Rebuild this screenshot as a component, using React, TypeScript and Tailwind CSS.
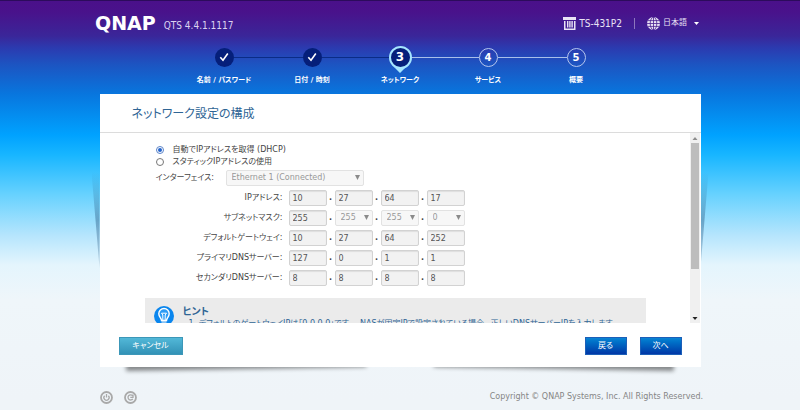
import type { ReactElement, ReactNode } from "react";
import { Fragment, useState } from "react";

const stepLineClass = "h-px flex-1";
const fieldClass = "block h-4 w-full rounded-xs border border-[#d2d2d2] bg-[#f2f2f2] px-[3px] text-[8px] text-[#555]"
  + " shadow-[inset_0_1px_1px_rgba(0,0,0,0.08)] outline-none";
const selectClass = "block h-4 w-full appearance-none rounded-xs border border-[#e2e2e2] bg-[#f7f7f7] pl-[5px] text-[8px]"
  + " text-[#999] opacity-100 outline-none";
const primaryButtonClass = "h-[18px] w-[42px] border border-[#1c5fb8] bg-linear-to-b from-[#0a83d3] to-[#0336a6] text-[8px] leading-none text-white";
const wedgeClass = "absolute top-[78px] h-24 w-2 bg-linear-to-b from-transparent via-[#1d4f7a]/40 to-[#1d4f7a]/20";
const liftClass = "absolute bottom-[7px] h-2 w-2/5 shadow-[0_9px_4px_rgba(0,0,0,0.45)]";

interface Step {
  readonly label: string;
  readonly state: "done" | "active" | "todo";
}

interface AddressRow {
  readonly id: string;
  readonly label: string;
  readonly octets: string[];
  readonly selectFrom?: number;
}

const steps: Step[] = [
  { label: "名前 / パスワード", state: "done" },
  { label: "日付 / 時刻", state: "done" },
  { label: "ネットワーク", state: "active" },
  { label: "サービス", state: "todo" },
  { label: "概要", state: "todo" }
];

const rows: AddressRow[] = [
  { id: "ip", label: "IPアドレス:", octets: ["10", "27", "64", "17"] },
  { id: "mask", label: "サブネットマスク:", octets: ["255", "255", "255", "0"], selectFrom: 1 },
  { id: "gateway", label: "デフォルトゲートウェイ:", octets: ["10", "27", "64", "252"] },
  { id: "dns1", label: "プライマリDNSサーバー:", octets: ["127", "0", "1", "1"] },
  { id: "dns2", label: "セカンダリDNSサーバー:", octets: ["8", "8", "8", "8"] }
];

function NasIcon(): ReactElement {
  return (
    <svg viewBox="0 0 13 13" className="h-[13px] w-[13px]" fill="#e9e3f5" aria-hidden="true">
      <path d="M0 0h13v3H0z" />
      <path d="M1 4h1.5v9H1zM11 4h1.5v9H11zM2 11.5h10V13H2zM4 4h1.4v6.5H4zM6.2 4h1.4v6.5H6.2zM8.4 4h1.4v6.5H8.4z" />
    </svg>
  );
}

function GlobeIcon(): ReactElement {
  return (
    <svg viewBox="0 0 13 13" className="h-[13px] w-[13px]" aria-hidden="true">
      <circle cx="6.5" cy="6.5" r="6.5" fill="#e9e3f5" />
      <g fill="none" stroke="#47208f" strokeWidth="0.8">
        <path d="M6.5 0v13M0 6.5h13M1 3.6h11M1 9.4h11" />
        <ellipse cx="6.5" cy="6.5" rx="3.3" ry="6.3" />
      </g>
    </svg>
  );
}

function BulbIcon(): ReactElement {
  return (
    <svg viewBox="0 0 20 20" className="h-5 w-5 shrink-0" aria-hidden="true">
      <circle cx="10" cy="10" r="10" fill="#0a86ee" />
      <path
        d="M7.5 14.5c0-2.5-2.7-3.6-2.7-6.8a5.2 5.2 0 0 1 10.4 0c0 3.2-2.7 4.3-2.7 6.8z"
        fill="#2b9bf5"
        stroke="#fff"
        strokeWidth="1.4"
      />
      <path d="M8.8 14V9L7.5 7.2h5L11.2 9v5M7.5 16h5M8 17.8h4" fill="none" stroke="#fff" strokeWidth="1" />
    </svg>
  );
}

function StepBadge({ step, index }: { readonly step: Step; readonly index: number }): ReactElement {
  if (step.state === "done") {
    return (
      <span className="grid h-[19px] w-[19px] place-items-center rounded-full bg-[#051f7a]">
        <svg viewBox="0 0 10 10" className="h-[10px] w-[10px]" fill="none" stroke="#fff" strokeWidth="1.6" aria-hidden="true">
          <path d="M1.3 5.2 4 8.2 8.8 1.5" />
        </svg>
      </span>
    );
  }
  if (step.state === "active") {
    return (
      <span className="relative grid h-[23px] w-[23px] place-items-center rounded-full border-2 border-[#a5e6ff] bg-[#051f7a] text-xs font-bold text-white">
        {index + 1}
        <svg viewBox="0 0 12 6" className="absolute top-[19px] h-[6px] w-3" fill="#a5e6ff" aria-hidden="true">
          <path d="M0 0q6 2.5 12 0L6 6z" />
        </svg>
      </span>
    );
  }
  return (
    <span className="grid h-[19px] w-[19px] place-items-center rounded-full border border-[#b5c6ee] text-[10px] font-bold text-white">
      {index + 1}
    </span>
  );
}

function Stepper(): ReactElement {
  return (
    <ol className="mx-auto flex w-full max-w-[440px] pt-2">
      {steps.map((step, i) => (
        <li key={step.label} className="flex flex-1 flex-col items-center" aria-current={step.state === "active" ? "step" : undefined}>
          <div className="flex h-6 w-full items-center">
            <span className={`${stepLineClass} ${i === 0 ? "" : step.state === "todo" ? "bg-[#a9bfea]" : "bg-[#0b2c86]"}`} />
            <StepBadge step={step} index={i} />
            <span className={`${stepLineClass} ${i === steps.length - 1 ? "" : step.state === "done" ? "bg-[#0b2c86]" : "bg-[#a9bfea]"}`} />
          </div>
          <span className="mt-1 text-[7px] leading-[14px] font-bold whitespace-nowrap text-white">{step.label}</span>
        </li>
      ))}
    </ol>
  );
}

function ModeOption({ checked, onSelect, children }: {
  readonly checked: boolean;
  readonly onSelect: () => void;
  readonly children: ReactNode;
}): ReactElement {
  return (
    <label className="flex h-3 items-center gap-[9px]">
      <input
        type="radio"
        name="mode"
        checked={checked}
        onChange={onSelect}
        className={"grid h-2 w-2 appearance-none place-items-center rounded-full border border-[#777] bg-white"
          + " before:h-1 before:w-1 before:rounded-full checked:border-[#5a83c8] checked:before:bg-[#2464cc]"}
      />
      {children}
    </label>
  );
}

function DisabledSelect({ id, value, label }: {
  readonly id?: string;
  readonly value: string;
  readonly label?: string;
}): ReactElement {
  return (
    <span className="relative block w-full">
      <select id={id} className={selectClass} aria-label={label} defaultValue={value} disabled>
        <option>{value}</option>
      </select>
      <svg viewBox="0 0 5 5" className="absolute top-[5px] right-1 h-[5px] w-[5px]" fill="#8a8a8a" aria-hidden="true">
        <path d="M0 0h5L2.5 5z" />
      </svg>
    </span>
  );
}

function AddressFields({ row }: { readonly row: AddressRow }): ReactElement {
  return (
    <div role="group" aria-labelledby={row.id} className="flex h-5 items-center">
      <span id={row.id} className="w-[138px] shrink-0 text-right">{row.label}</span>
      <div className="ml-[6px] flex items-center">
        {row.octets.map((octet, i) => {
          const label = `${row.label} ${i + 1}`;
          return (
            <Fragment key={label}>
              {i > 0 ? <span className="w-2 text-center font-bold">.</span> : null}
              <div className="w-[38px]">
                {row.selectFrom !== undefined && i >= row.selectFrom
                  ? <DisabledSelect value={octet} label={label} />
                  : <input className={fieldClass} aria-label={label} defaultValue={octet} readOnly />}
              </div>
            </Fragment>
          );
        })}
      </div>
    </div>
  );
}

function Scrollbar(): ReactElement {
  return (
    <div className="mr-px flex w-[10px] shrink-0 flex-col items-center bg-[#f0f0f0]" aria-hidden="true">
      <svg viewBox="0 0 10 10" className="h-[10px] w-[10px]" fill="#8c8c8c"><path d="M5 4 7.5 7h-5z" /></svg>
      <div className="flex w-2 flex-1 flex-col">
        <div className="h-[74%] bg-[#bdbdbd]" />
      </div>
      <svg viewBox="0 0 10 10" className="h-[10px] w-[10px]" fill="#222"><path d="M5 7 7.5 4h-5z" /></svg>
    </div>
  );
}

export default function App(): ReactElement {
  const [mode, setMode] = useState<"dhcp" | "static">("dhcp");

  return (
    <div
      className={"min-h-screen font-['DejaVu_Sans','Noto_Sans_CJK_JP',sans-serif] text-[8px] text-[#444] [font-feature-settings:'palt']"
        + " bg-[linear-gradient(#4a108a_0px,#49128b_12px,#3a2699_36px,#2b3bb0_48px,#1c55c2_65px,#0876de_94px,#00a2ff_135px,#18b6ff_155px,#68d2fe_195px,#b5e5fd_235px,#e4f5fd_265px,#eff6fa_300px,#eff4f8_400px)]"}
    >
      <header className="border-t border-[#2c0b5c]">
        <div className="mx-auto flex h-9 w-full max-w-[610px] items-center justify-between pt-2 pr-[6px] text-white">
          <div className="flex items-center gap-2">
            <span className="text-[19px] leading-none font-bold">QNAP</span>
            <span className="pt-[6px] font-['DejaVu_Sans_Condensed'] text-[10px] leading-none text-[#ddd3f0]">QTS 4.4.1.1117</span>
          </div>
          <div className="flex items-center text-[#e9e3f5]">
            <NasIcon />
            <span className="ml-[3px] font-['DejaVu_Sans_Condensed'] text-[10px]">TS-431P2</span>
            <span className="mx-3 h-[11px] w-px bg-[#8d76bd]" />
            <button type="button" className="flex items-center gap-[3px]" aria-haspopup="menu">
              <GlobeIcon />
              日本語
              <svg viewBox="0 0 5 3" className="ml-1 h-[3px] w-[5px]" fill="#fff" aria-hidden="true"><path d="M0 0h5L2.5 3z" /></svg>
            </button>
          </div>
        </div>
        <Stepper />
      </header>

      <main className="relative mx-auto mt-[7px] w-full max-w-[601px]">
        <div className={`${wedgeClass} -left-2 [clip-path:polygon(0_0,100%_0,100%_100%)]`} />
        <div className={`${wedgeClass} -right-2 [clip-path:polygon(0_0,100%_0,0_100%)]`} />
        <div className={`${liftClass} left-[26px] -rotate-1`} />
        <div className={`${liftClass} right-[26px] rotate-1`} />
        <div className="relative bg-white">
          <h1 className="h-[39px] border-b border-[#dcdcdc] pt-px pl-8 text-[12px] leading-[39px] text-[#2f6595]">ネットワーク設定の構成</h1>
          <div className="flex h-[190px]">
            <div className="min-w-0 flex-1 overflow-hidden pt-[11px] pr-11 pl-[45px]">
              <fieldset className="pl-[11px]">
                <ModeOption checked={mode === "dhcp"} onSelect={() => { setMode("dhcp"); }}>自動でIPアドレスを取得 (DHCP)</ModeOption>
                <ModeOption checked={mode === "static"} onSelect={() => { setMode("static"); }}>スタティックIPアドレスの使用</ModeOption>
              </fieldset>
              <div className="flex h-5 items-center pl-[11px]">
                <label htmlFor="interface" className="w-[70px] shrink-0">インターフェイス:</label>
                <div className="w-[138px]">
                  <DisabledSelect id="interface" value="Ethernet 1 (Connected)" />
                </div>
              </div>
              {rows.map((row) => <AddressFields key={row.id} row={row} />)}
              <section className="mt-[10px] flex gap-[9px] bg-[#ebebeb] px-[9px] py-2 text-[#2f6595]">
                <BulbIcon />
                <div className="min-w-0">
                  <h2 className="text-[10px] leading-3 font-bold">ヒント</h2>
                  <ol className="list-inside list-decimal pl-[6px] leading-3">
                    <li className="whitespace-nowrap">
                      デフォルトのゲートウェイIPは「0.0.0.0」です。　NASが固定IPで設定されている場合、 正しいDNSサーバーIPを入力します。
                    </li>
                  </ol>
                </div>
              </section>
            </div>
            <Scrollbar />
          </div>
          <div className="flex items-start justify-between px-[19px] pt-[14px] pb-3">
            <button type="button" className="h-[18px] w-16 border border-[#3c97b8] bg-linear-to-b from-[#52b8d8] to-[#3292b6] text-[8px] leading-none text-white">
              キャンセル
            </button>
            <div className="flex gap-[13px]">
              <button type="button" className={primaryButtonClass}>戻る</button>
              <button type="button" className={primaryButtonClass}>次へ</button>
            </div>
          </div>
        </div>
      </main>

      <footer className="mx-auto mt-6 flex w-full max-w-[606px] items-start justify-between pl-[3px]">
        <div className="flex gap-[11px]">
          <button type="button" aria-label="Shut down">
            <svg viewBox="0 0 13 13" className="h-[13px] w-[13px]" fill="none" stroke="#a9a9a9" aria-hidden="true">
              <circle cx="6.5" cy="6.5" r="5.5" strokeWidth="1.8" />
              <path d="M4.6 4.8a2.6 2.6 0 1 0 3.8 0M6.5 3v3.5" strokeWidth="1.3" />
            </svg>
          </button>
          <button type="button" aria-label="Restart">
            <svg viewBox="0 0 13 13" className="h-[13px] w-[13px]" fill="none" stroke="#a9a9a9" aria-hidden="true">
              <circle cx="6.5" cy="6.5" r="5.5" strokeWidth="1.8" />
              <path d="M8.8 7.8a2.6 2.6 0 1 1-.2-3.1M9 3.6v2.8H6.3" strokeWidth="1.3" />
            </svg>
          </button>
        </div>
        <p className="leading-3 text-[#858585]">Copyright © QNAP Systems, Inc. All Rights Reserved.</p>
      </footer>
    </div>
  );
}
